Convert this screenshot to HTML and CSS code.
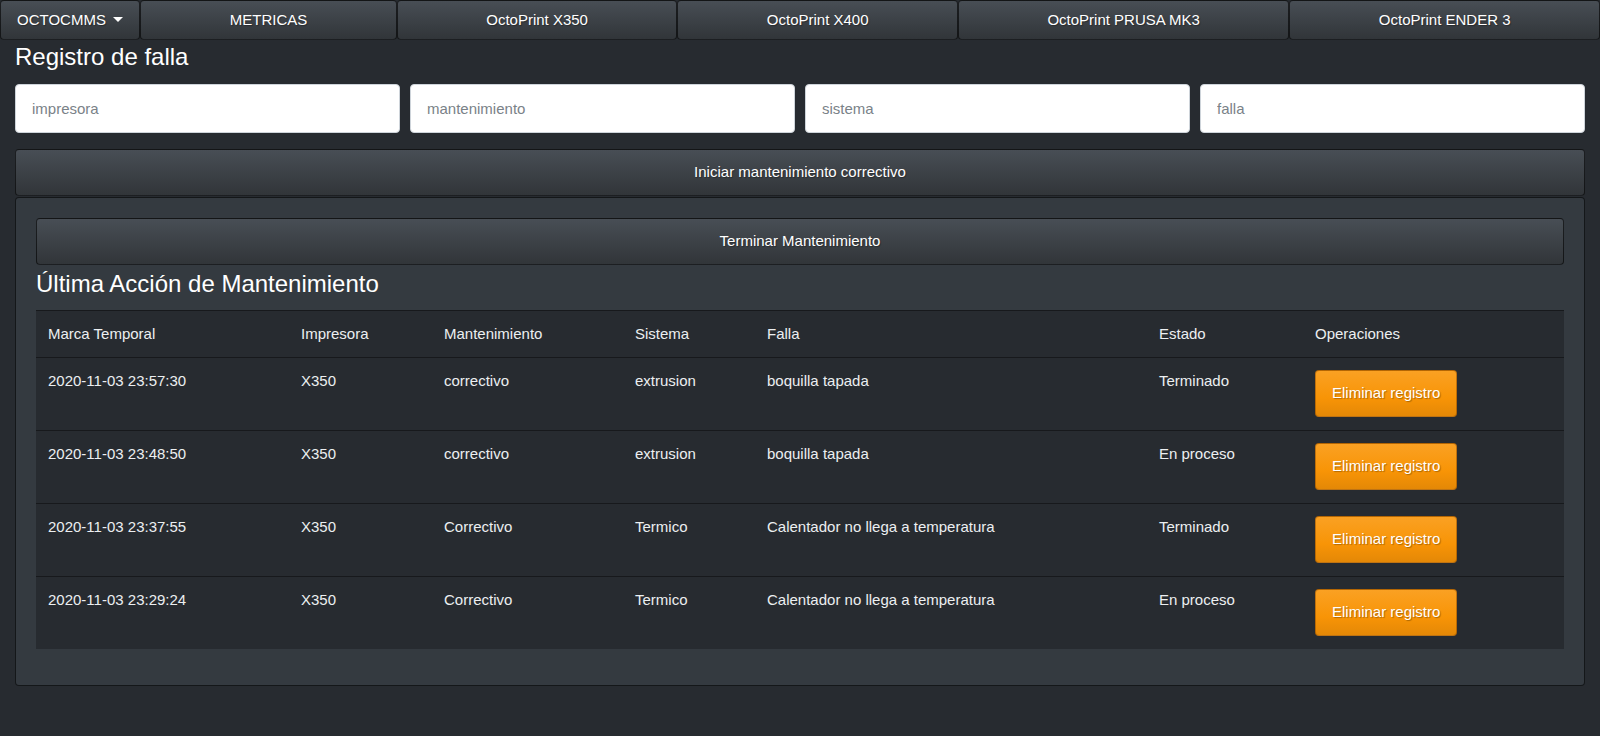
FILE: index.html
```html
<!DOCTYPE html>
<html lang="es">
<head>
<meta charset="utf-8">
<title>OCTOCMMS</title>
<link rel="stylesheet" href="styles.css">
</head>
<body>
<nav class="topnav">
  <button class="btn nav-btn nav-drop">OCTOCMMS<span class="caret"></span></button>
  <button class="btn nav-btn grow">METRICAS</button>
  <button class="btn nav-btn grow">OctoPrint X350</button>
  <button class="btn nav-btn grow">OctoPrint X400</button>
  <button class="btn nav-btn grow">OctoPrint PRUSA MK3</button>
  <button class="btn nav-btn grow">OctoPrint ENDER 3</button>
</nav>
<main class="container">
  <h4 class="title">Registro de falla</h4>
  <div class="form-row">
    <input class="field" type="text" placeholder="impresora">
    <input class="field" type="text" placeholder="mantenimiento">
    <input class="field" type="text" placeholder="sistema">
    <input class="field" type="text" placeholder="falla">
  </div>
  <button class="btn block-btn">Iniciar mantenimiento correctivo</button>
  <section class="card">
    <button class="btn block-btn inner-btn">Terminar Mantenimiento</button>
    <h4 class="subtitle">Última Acción de Mantenimiento</h4>
    <table class="table">
      <colgroup>
        <col class="c1"><col class="c2"><col class="c3"><col class="c4"><col class="c5"><col class="c6"><col class="c7">
      </colgroup>
      <thead>
        <tr><th>Marca Temporal</th><th>Impresora</th><th>Mantenimiento</th><th>Sistema</th><th>Falla</th><th>Estado</th><th>Operaciones</th></tr>
      </thead>
      <tbody>
        <tr><td>2020-11-03 23:57:30</td><td>X350</td><td>correctivo</td><td>extrusion</td><td>boquilla tapada</td><td>Terminado</td><td><button class="btn warn">Eliminar registro</button></td></tr>
        <tr><td>2020-11-03 23:48:50</td><td>X350</td><td>correctivo</td><td>extrusion</td><td>boquilla tapada</td><td>En proceso</td><td><button class="btn warn">Eliminar registro</button></td></tr>
        <tr><td>2020-11-03 23:37:55</td><td>X350</td><td>Correctivo</td><td>Termico</td><td>Calentador no llega a temperatura</td><td>Terminado</td><td><button class="btn warn">Eliminar registro</button></td></tr>
        <tr><td>2020-11-03 23:29:24</td><td>X350</td><td>Correctivo</td><td>Termico</td><td>Calentador no llega a temperatura</td><td>En proceso</td><td><button class="btn warn">Eliminar registro</button></td></tr>
      </tbody>
    </table>
  </section>
</main>
</body>
</html>
```
FILE: styles.css
```css
* { box-sizing: border-box; }
html, body {
  margin: 0;
  background: #272b30;
  color: #e9ecef;
  font-family: "Liberation Sans", Arial, sans-serif;
  font-size: 15px;
  line-height: 1.5;
}
.btn {
  font-family: inherit;
  font-size: 15px;
  line-height: 1.5;
  color: #fff;
  text-shadow: 1px 1px 1px rgba(0,0,0,0.3);
  background-color: #3a3f44;
  background-image: linear-gradient(#484e55, #3a3f44 60%, #313539);
  border: 1px solid rgba(0,0,0,0.6);
  border-radius: 4px;
  cursor: pointer;
  white-space: nowrap;
}
.topnav {
  display: flex;
  width: 1600px;
  height: 40px;
}
.nav-btn {
  height: 40px;
  padding: 0 16px;
  display: flex;
  align-items: center;
  justify-content: center;
}
.nav-drop { flex: none; }
.grow { flex: 1 1 auto; }
.caret {
  display: inline-block;
  margin-left: 7.5px;
  width: 0;
  height: 0;
  border-top: 5px solid #fff;
  border-left: 5px solid transparent;
  border-right: 5px solid transparent;
  margin-top: -2px;
}
.container {
  padding: 0 15px;
}
.title, .subtitle {
  font-size: 24px;
  font-weight: 400;
  line-height: 1.2;
  color: #fff;
}
.title { margin: 3px 0 12px; }
.form-row {
  display: grid;
  grid-template-columns: repeat(4, 1fr);
  gap: 10px;
  margin-bottom: 16px;
}
.field {
  height: 49px;
  width: 100%;
  padding: 12px 16px;
  font-family: inherit;
  font-size: 15px;
  line-height: 1.5;
  color: #3a3f44;
  background: #fff;
  border: 1px solid #ced4da;
  border-radius: 4px;
}
.field::placeholder { color: #7a8288; }
.block-btn {
  display: block;
  width: 100%;
  height: 47px;
  padding: 0 12px;
}
.card {
  margin-top: 1px;
  background: #343a40;
  border: 1px solid rgba(0,0,0,0.6);
  border-radius: 4px;
  padding: 20px;
}
.subtitle { margin: 5px 0 11px; }
.table {
  width: 100%;
  table-layout: fixed;
  border-collapse: collapse;
  background: #272b30;
  margin-bottom: 16px;
  color: #eceff1;
}
.c1 { width: 253px; }
.c2 { width: 143px; }
.c3 { width: 191px; }
.c4 { width: 132px; }
.c5 { width: 392px; }
.c6 { width: 156px; }
.c7 { width: 261px; }
.table th, .table td {
  text-align: left;
  font-weight: 400;
  vertical-align: top;
  border-top: 1px solid #17191c;
  padding: 12px;
}
.table td { padding-bottom: 13px; }
.warn {
  height: 47px;
  padding: 0 16px;
  background-color: #f89406;
  background-image: linear-gradient(#faa123, #f89406 60%, #e48806);
  border: 1px solid rgba(120,60,0,0.45);
}
```
